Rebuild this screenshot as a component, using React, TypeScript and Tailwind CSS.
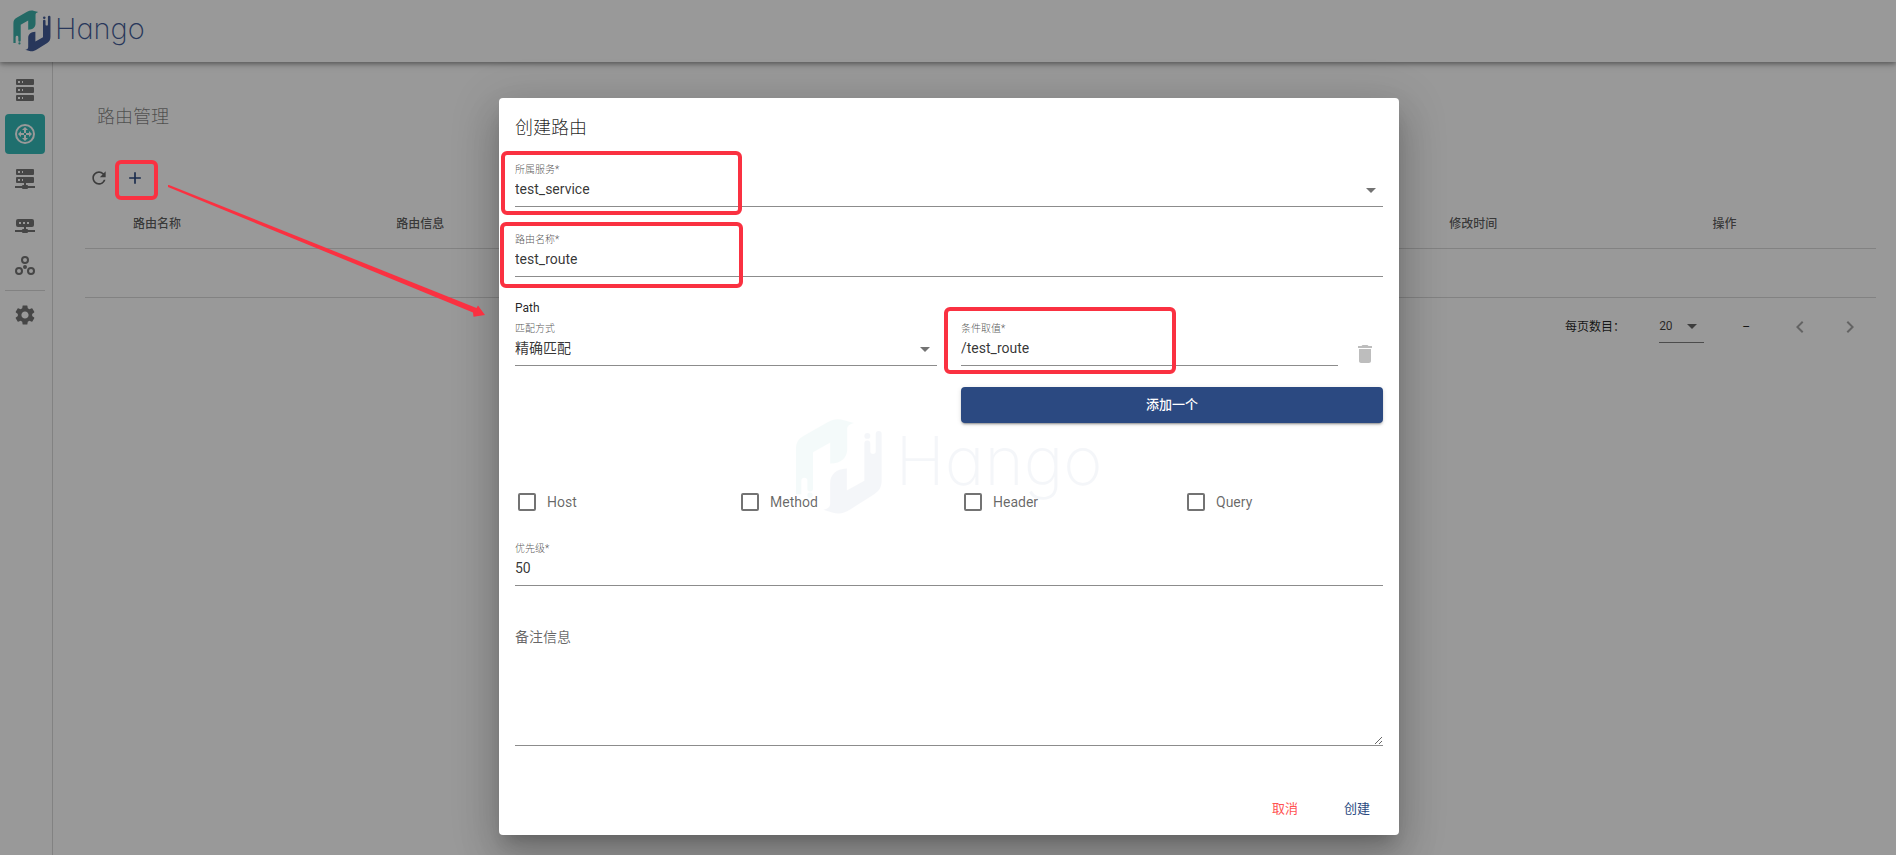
import type { ReactNode } from "react";
import { MdAdd, MdArrowDropDown, MdChevronLeft, MdChevronRight, MdDelete, MdRefresh, MdSettings } from "react-icons/md";

function LogoMark({ className }: { className: string }) {
  return (
    <svg viewBox="108 50 270 298" className={className} aria-hidden="true">
      <g className="fill-[#3bb0a8]">
        <path d="M111 284V146C111 125 118 114 134 105L208 63C226 53 240 51 258 57L288 65C275 69 268 74 268 84V146C268 172 250 189 216 190V125L163 155V267A8.500 8.500 0 0 1 146 267V243A9.500 9.500 0 0 0 127 243V284Z" />
        <circle cx="154" cy="287" r="8" />
      </g>
      <g className="fill-[#435c98]">
        <path d="M195 332C209 329 216 324 216 312V250C216 224 234 206 267 205V273L321 243V128A9 9 0 0 1 339 128V152A8.500 8.500 0 0 0 356 152V99A9 9 0 0 1 374 99V240C374 262 367 274 351 284L277 331C258 343 243 346 225 341Z" />
        <circle cx="330" cy="105" r="9" />
      </g>
    </svg>
  );
}

const sideIcons: { name: string; path: string }[] = [
  {
    name: "服务管理",
    path: "M4,1H20A1,1 0 0,1 21,2V6A1,1 0 0,1 20,7H4A1,1 0 0,1 3,6V2A1,1 0 0,1 4,1M4,9H20A1,1 0 0,1 21,10V14A1,1 0 0,1 20,15H4A1,1 0 0,1 3,14V10A1,1 0 0,1 4,9M4,17H20A1,1 0 0,1 21,18V22A1,1 0 0,1 20,23H4A1,1 0 0,1 3,22V18A1,1 0 0,1 4,17M9,5H10V3H9V5M9,13H10V11H9V13M9,21H10V19H9V21M5,3V5H7V3H5M5,11V13H7V11H5M5,19V21H7V19H5Z",
  },
  {
    name: "路由管理",
    path: "M12,2A10,10 0 0,1 22,12A10,10 0 0,1 12,22A10,10 0 0,1 2,12A10,10 0 0,1 12,2M12,4A8,8 0 0,0 4,12A8,8 0 0,0 12,20A8,8 0 0,0 20,12A8,8 0 0,0 12,4M13,13V16H15L12,19L9,16H11V13H13M5,12L8,9V11H11V13H8V15L5,12M19,12L16,15V13H13V11H16V9L19,12M11,11V8H9L12,5L15,8H13V11H11Z",
  },
  {
    name: "已发布服务",
    path: "M13,19H14A1,1 0 0,1 15,20H22V22H15A1,1 0 0,1 14,23H10A1,1 0 0,1 9,22H2V20H9A1,1 0 0,1 10,19H11V17H4A1,1 0 0,1 3,16V12A1,1 0 0,1 4,11H20A1,1 0 0,1 21,12V16A1,1 0 0,1 20,17H13V19M4,3H20A1,1 0 0,1 21,4V8A1,1 0 0,1 20,9H4A1,1 0 0,1 3,8V4A1,1 0 0,1 4,3M9,7H10V5H9V7M9,15H10V13H9V15M5,5V7H7V5H5M5,13V15H7V13H5Z",
  },
  {
    name: "已发布路由",
    path: "M5,9H19A2,2 0 0,1 21,11V15A2,2 0 0,1 19,17H13V19H14A1,1 0 0,1 15,20H22V22H15A1,1 0 0,1 14,23H10A1,1 0 0,1 9,22H2V20H9A1,1 0 0,1 10,19H11V17H5A2,2 0 0,1 3,15V11A2,2 0 0,1 5,9M6,12V14H8V12H6M10,12V14H12V12H10M14,12V14H16V12H14Z",
  },
  {
    name: "插件管理",
    path: "M12,2A4,4 0 0,1 12,10A4,4 0 0,1 12,2M12,4A2,2 0 0,0 12,8A2,2 0 0,0 12,4M6,13A4,4 0 0,1 6,21A4,4 0 0,1 6,13M6,15A2,2 0 0,0 6,19A2,2 0 0,0 6,15M18,13A4,4 0 0,1 18,21A4,4 0 0,1 18,13M18,15A2,2 0 0,0 18,19A2,2 0 0,0 18,15M12,11A2,2 0 0,1 12,15A2,2 0 0,1 12,11Z",
  },
];

function Highlight({ className }: { className: string }) {
  return <div className={`pointer-events-none absolute rounded-md border-4 border-[#fa3141] ${className}`} />;
}

function Field({ id, label, children }: { id: string; label: string; children: ReactNode }) {
  return (
    <div className="relative min-w-0 flex-1">
      <label htmlFor={id} className="block h-[17px] text-[10px] leading-[19px] font-light text-black/70">
        {label}
      </label>
      <div className="relative border-b border-[#8c8c8c] pb-[5px]">{children}</div>
    </div>
  );
}

function SelectBox({ id, value }: { id: string; value: string }) {
  return (
    <>
      <select id={id} className="block h-6 w-full appearance-none bg-transparent text-sm text-black/80 outline-none">
        <option>{value}</option>
      </select>
      <MdArrowDropDown className="pointer-events-none absolute top-px right-0 size-6 text-black/55" />
    </>
  );
}

const inputClass = "block h-6 w-full bg-transparent text-sm text-black/80 outline-none";

export default function App() {
  return (
    <div className="relative min-h-screen overflow-hidden bg-white font-['Roboto','Noto_Sans_CJK_SC',sans-serif] text-black/87">
      <div className="flex min-h-screen flex-col">
        <header className="relative flex h-[62px] items-center gap-[3px] bg-white pl-3 shadow-[0_2px_4px_rgba(0,0,0,0.3),0_3px_8px_rgba(0,0,0,0.15)]">
          <LogoMark className="h-[42px] w-10" />
          <span className="pb-1 font-['Inter'] text-[29px] leading-9 font-extralight text-[#435c98] [font-feature-settings:'cv11']">Hango</span>
        </header>
        <div className="flex flex-1">
          <nav className="flex w-[53px] shrink-0 flex-col items-start gap-1 border-r border-black/15 pt-2 pl-[5px]">
            {sideIcons.map((icon, i) => (
              <a
                key={icon.name}
                href="#"
                aria-label={icon.name}
                className={
                  i === 1
                    ? "flex size-10 items-center justify-center rounded bg-[#35bab7] text-white"
                    : "flex size-10 items-center justify-center text-[#757575]"
                }
              >
                <svg viewBox="0 0 24 24" className="size-6 fill-current">
                  <path d={icon.path} fillRule="evenodd" />
                </svg>
              </a>
            ))}
            <hr className="w-10 border-black/15" />
            <a href="#" aria-label="设置" className="flex size-10 items-center justify-center text-[#757575]">
              <MdSettings className="size-6" />
            </a>
          </nav>
          <main className="min-w-0 flex-1 pt-[41px] pr-5 pl-8">
            <h1 className="pl-3 text-lg leading-7 font-light text-black/50">路由管理</h1>
            <div className="mt-[29px] -ml-1 flex">
              <button aria-label="刷新" className="flex size-9 items-center justify-center text-black/60">
                <MdRefresh className="size-5" />
              </button>
              <button aria-label="新建" className="flex size-9 items-center justify-center text-[#2b4981]">
                <MdAdd className="size-5" />
              </button>
            </div>
            <table className="mt-1 w-full table-fixed border-collapse text-left text-xs">
              <thead>
                <tr className="h-12 border-b border-black/15 text-black/65">
                  <th className="w-8" />
                  <th className="w-[14.7%] px-4 font-medium">路由名称</th>
                  <th className="w-[14.7%] px-4 font-medium">路由信息</th>
                  <th className="w-[14.7%]" />
                  <th className="w-[14.7%]" />
                  <th className="w-[14.7%]" />
                  <th className="w-[14.7%] px-4 font-medium">修改时间</th>
                  <th className="px-4 font-medium">操作</th>
                </tr>
              </thead>
              <tbody>
                <tr className="h-[49px] border-b border-black/15">
                  <td colSpan={8} />
                </tr>
              </tbody>
            </table>
            <div className="flex h-[58px] items-center justify-end pr-2 text-xs">
              <label htmlFor="page-size">每页数目：</label>
              <div className="relative ml-[34px] w-[45px] border-b border-black/50">
                <select id="page-size" className="block h-8 w-full appearance-none bg-transparent text-black/75 outline-none">
                  <option>20</option>
                </select>
                <MdArrowDropDown className="pointer-events-none absolute top-1 right-0 size-6 text-black/60" />
              </div>
              <span className="ml-[38px]">–</span>
              <button aria-label="上一页" disabled className="ml-[32px] flex size-9 items-center justify-center text-black/35">
                <MdChevronLeft className="size-6" />
              </button>
              <button aria-label="下一页" disabled className="ml-3.5 flex size-9 items-center justify-center text-black/35">
                <MdChevronRight className="size-6" />
              </button>
            </div>
          </main>
        </div>
      </div>

      <div className="absolute inset-0 flex items-start justify-center bg-black/40 pt-[98px] pl-0.5">
        <section
          role="dialog"
          aria-labelledby="dialog-title"
          className="relative w-[900px] rounded bg-white px-4 pt-[17px] pb-2 shadow-[0_11px_15px_-7px_rgba(0,0,0,0.2),0_24px_38px_3px_rgba(0,0,0,0.14),0_9px_46px_8px_rgba(0,0,0,0.12)]"
        >
          <div aria-hidden="true" className="pointer-events-none absolute inset-0 flex items-center justify-center gap-3 opacity-5">
            <LogoMark className="h-[97px] w-[88px]" />
            <span className="pb-3 font-['Inter'] text-[67px] leading-none font-extralight text-[#435c98] [font-feature-settings:'cv11']">Hango</span>
          </div>
          <form className="relative" onSubmit={(e) => e.preventDefault()}>
            <h2 id="dialog-title" className="text-lg leading-[26px] font-light">创建路由</h2>
            <div className="relative mt-[19px]">
              <Field id="service" label="所属服务*">
                <SelectBox id="service" value="test_service" />
              </Field>
              <Highlight className="-top-[9px] -left-3.5 h-16 w-[241px]" />
            </div>
            <div className="relative mt-[23px]">
              <Field id="route" label="路由名称*">
                <input id="route" defaultValue="test_route" className={inputClass} />
              </Field>
              <Highlight className="-top-2 -left-[15px] h-[66px] w-[243px]" />
            </div>

            <h3 className="mt-[21px] text-xs leading-[21px]">Path</h3>
            <div className="grid grid-cols-2 gap-x-6 gap-y-[21px]">
              <Field id="match" label="匹配方式">
                <SelectBox id="match" value="精确匹配" />
              </Field>
              <div className="relative flex">
                <Field id="value" label="条件取值*">
                  <input id="value" defaultValue="/test_route" className={inputClass} />
                </Field>
                <button type="button" aria-label="删除" className="mr-1.5 ml-[15px] self-end text-[#bdbdbd]">
                  <MdDelete className="size-6" />
                </button>
                <Highlight className="-top-3 -left-[17px] h-[67px] w-[232px]" />
              </div>
              <button
                type="button"
                className="col-start-2 h-9 rounded bg-[#2b4981] text-[13px] font-medium text-white shadow-[0_3px_1px_-2px_rgba(0,0,0,0.2),0_2px_2px_rgba(0,0,0,0.14),0_1px_5px_rgba(0,0,0,0.12)]"
              >
                添加一个
              </button>
            </div>

            <div className="mt-[67px] grid grid-cols-4 gap-6">
              {["Host", "Method", "Header", "Query"].map((name) => (
                <label key={name} className="flex h-6 items-center gap-[11px] pl-[3px] text-sm text-black/60">
                  <input type="checkbox" className="size-[18px] appearance-none rounded-xs border-2 border-black/55" />
                  {name}
                </label>
              ))}
            </div>

            <div className="mt-[25px]">
              <Field id="priority" label="优先级*">
                <input id="priority" defaultValue="50" className={inputClass} />
              </Field>
            </div>
            <textarea
              aria-label="备注信息"
              placeholder="备注信息"
              className="mt-[41px] block h-[119px] w-full resize-y border-b border-[#8c8c8c] bg-transparent text-sm outline-none placeholder:text-black/60"
            />
            <div className="mt-[45px] flex justify-end gap-2 text-[13px]">
              <button type="button" className="h-9 w-16 pl-3 text-[#ff5252]">取消</button>
              <button type="submit" className="h-9 w-16 pl-3 text-[#2b4981]">创建</button>
            </div>
          </form>
        </section>
      </div>

      <Highlight className="top-40 left-[115px] h-10 w-[43px]" />
      <svg viewBox="0 0 320 134" className="pointer-events-none absolute top-[184px] left-[167px] h-[134px] w-80 fill-[#fa3141]" aria-hidden="true">
        <path d="M1 1L2 1L309.500 124L311 121.500L318 131L306.500 132.700L306 128.500L1 3Z" />
      </svg>
    </div>
  );
}
